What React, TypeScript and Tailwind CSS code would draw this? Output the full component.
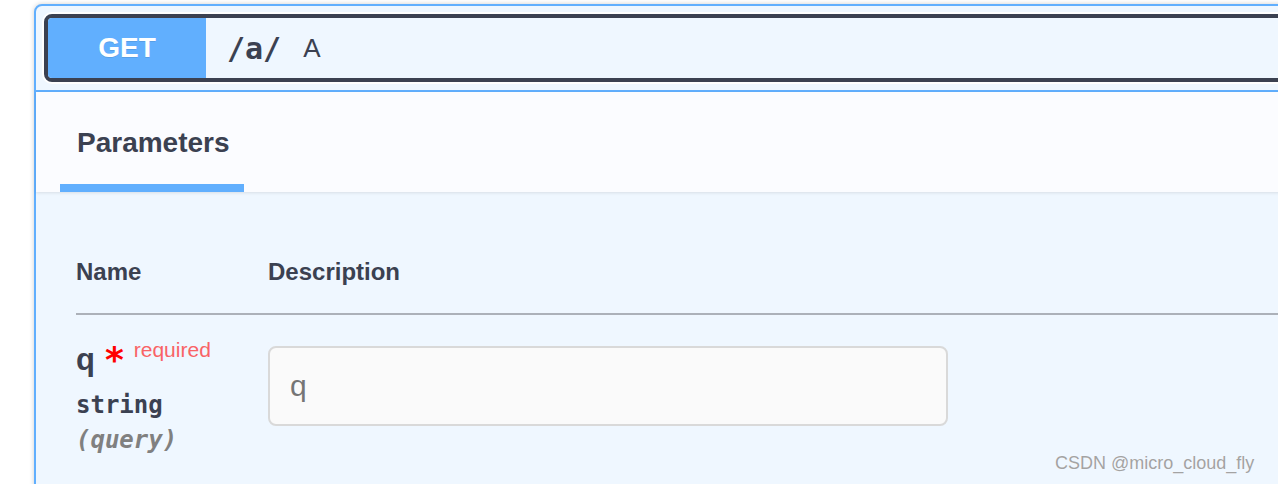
import React from 'react'

const SANS = "font-['Liberation_Sans',Arial,sans-serif]"
const MONO = "font-['DejaVu_Sans_Mono','Liberation_Mono',monospace]"

export default function App() {
  return (
    <div className={`relative h-[484px] w-[1278px] overflow-hidden bg-white ${SANS} text-[#3b4151]`}>
      <div className="ml-[34px] mt-[4px] w-[1300px] rounded-[8px] border-2 border-[#61affe] bg-[#eff7ff] shadow-[0_0_5px_rgba(0,0,0,0.19)]">
        {/* Summary */}
        <div className="border-b-2 border-[#61affe] p-[8px]">
          <div className="flex items-center rounded-[8px] border-4 border-[#3b4151] ring-2 ring-white">
            <div className="h-[60px] w-[158px] rounded-l-[4px] bg-[#61affe] text-center text-[28px] font-bold leading-[60px] text-white [text-shadow:0_1px_0_rgba(0,0,0,0.1)]">
              GET
            </div>
            <span className={`ml-[21px] ${MONO} text-[30px] font-bold`}>/a/</span>
            <span className="ml-[22px] text-[26px]">A</span>
          </div>
        </div>

        {/* Tab header */}
        <div className="flex h-[100px] bg-[#fbfcff] pl-[24px] shadow-[0_1px_3px_rgba(0,0,0,0.1)]">
          <div className="flex w-[184px] flex-col">
            <div className="pl-[17px] pt-[37px] text-[28px] font-bold leading-[28px]">Parameters</div>
            <div className="mt-auto h-[8px] bg-[#61affe]" />
          </div>
        </div>

        {/* Body */}
        <div className="px-[40px] pt-[68px]">
          <div className="flex border-b-2 border-[#acb1b9] pb-[29px] text-[24px] font-bold leading-[24px]">
            <div className="w-[192px]">Name</div>
            <div>Description</div>
          </div>
          <div className="flex pt-[30px]">
            <div className="w-[192px]">
              <div className="whitespace-nowrap text-[31px] font-bold leading-[30px]">
                q
                <span className="ml-[10px] align-[-2px] font-['DejaVu_Sans',sans-serif] text-[36px] leading-[0px] text-[#ff0000]">
                  *
                </span>
                <span className="ml-[10px] align-[13px] text-[21px] font-normal leading-[0px] text-[#f96366]">
                  required
                </span>
              </div>
              <div className={`mt-[18px] ${MONO} text-[24px] font-bold leading-[24px]`}>string</div>
              <div className={`mt-[11px] ${MONO} text-[24px] font-bold italic leading-[24px] text-[#808080]`}>
                (query)
              </div>
            </div>
            <div className="pt-[1px]">
              <input
                placeholder="q"
                className="h-[80px] w-[680px] rounded-[8px] border-2 border-[#d9d9d9] bg-[#fafafa] px-[20px] text-[30px] text-[#3b4151] outline-none placeholder:text-[#757575]"
              />
            </div>
          </div>
        </div>
        <div className="h-[100px]" />
      </div>

      <div className="absolute left-[1055px] top-[452px] text-[18px] leading-[22px] text-[#a3a3a3] [text-shadow:0_0_1px_#fff]">
        CSDN @micro_cloud_fly
      </div>
    </div>
  )
}
